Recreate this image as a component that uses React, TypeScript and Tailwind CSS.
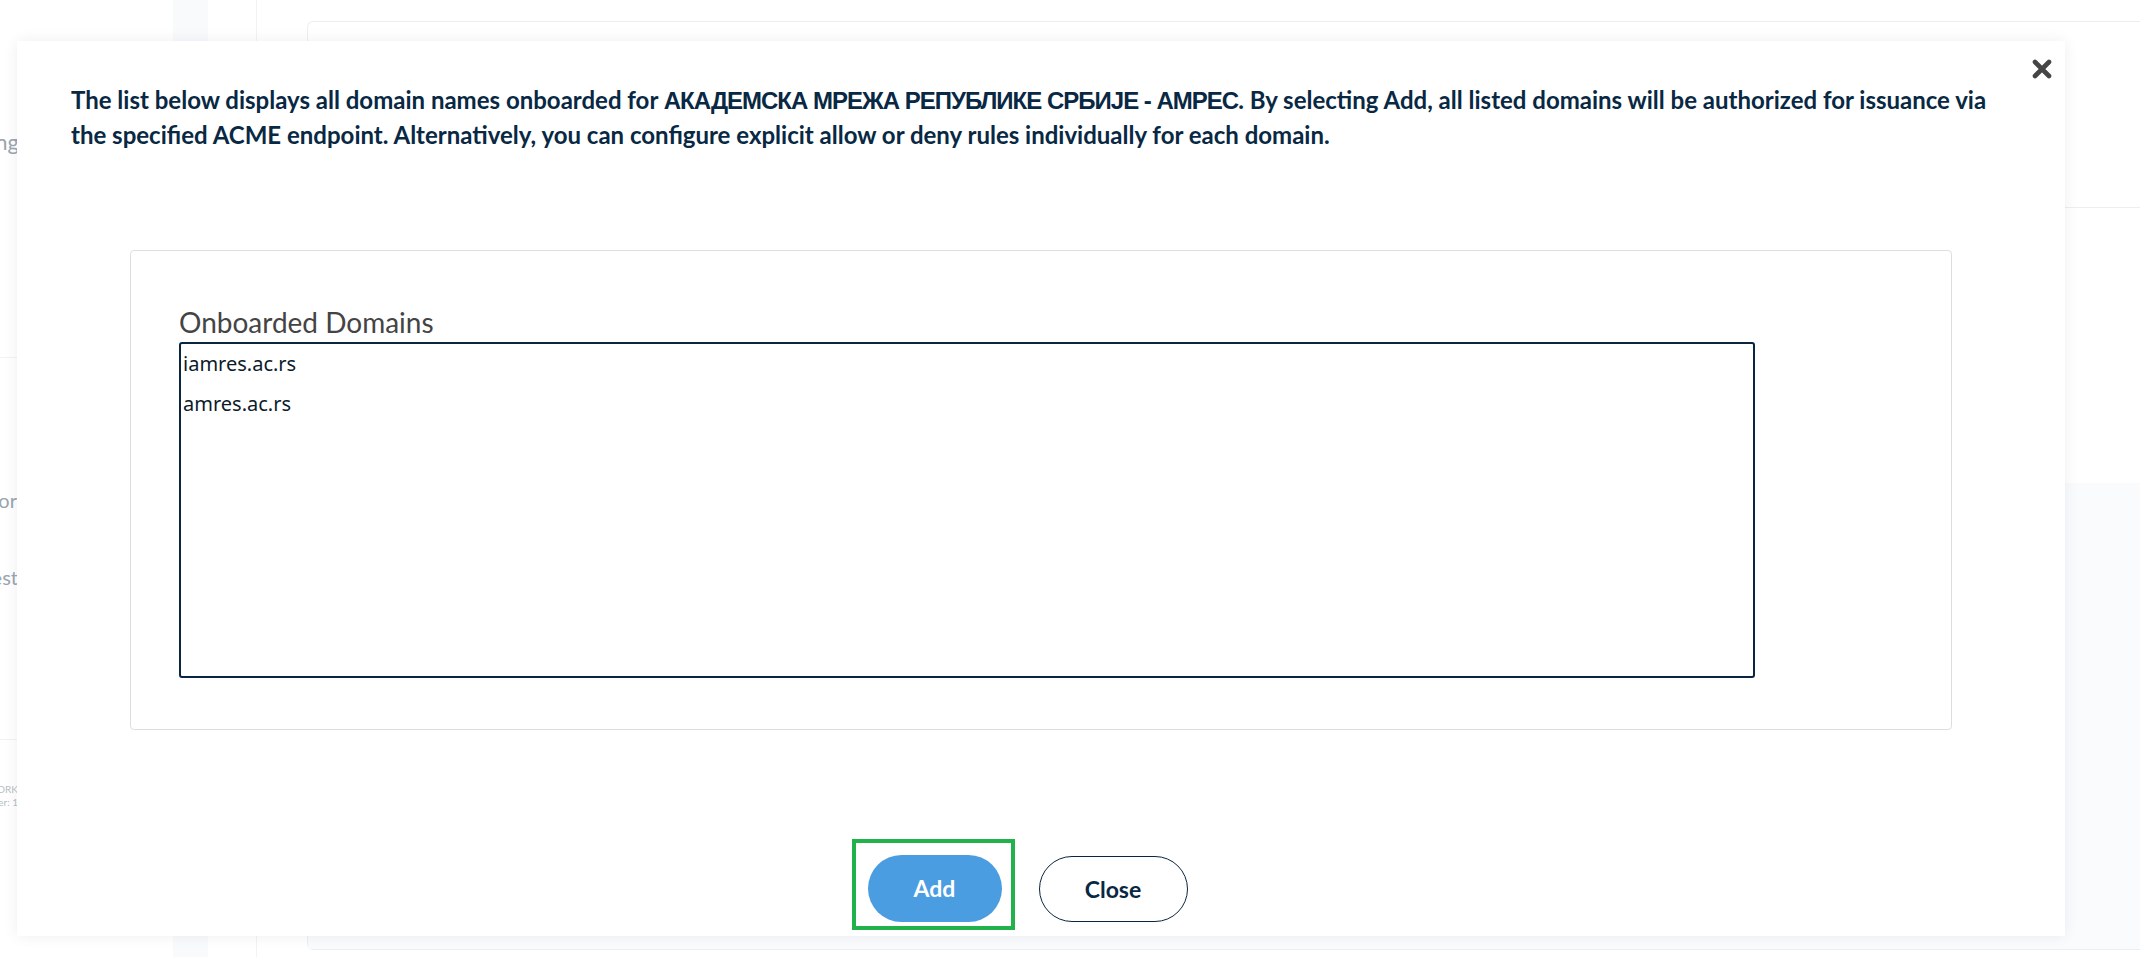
const domains = ['iamres.ac.rs', 'amres.ac.rs'];

function Sidebar() {
  // Only the last few pixels of the sidebar show past the dialog's left edge.
  return (
    <aside className="flex w-[173px] shrink-0 flex-col bg-white text-[#9aa5b1] [font-family:Lato,'Noto_Sans',sans-serif]">
      <div className="flex h-[358px] flex-col border-b border-[#f1f2f4]">
        <div className="mt-[124px] flex h-[34px] w-[19px] items-center justify-end whitespace-nowrap text-[22px]">
          Signing
        </div>
      </div>
      <div className="flex h-[382px] flex-col border-b border-[#f1f2f4]">
        <div className="mt-[126px] flex h-[32px] w-[17px] items-center justify-end whitespace-nowrap text-[20px]">
          Monitor
        </div>
        <div className="mt-[45px] flex h-[32px] w-[18px] items-center justify-end whitespace-nowrap text-[20px]">
          Request
        </div>
      </div>
      <div className="mt-[43px] flex w-[18px] flex-col items-end whitespace-nowrap text-[10px] leading-[13px] text-[#b8bfc7]">
        <span>NETWORK</span>
        <span>Server: 1</span>
      </div>
    </aside>
  );
}

function Background() {
  return (
    <div className="flex h-full w-full">
      <Sidebar />
      <div className="w-[35px] shrink-0 bg-[#f9fafc]" />
      <div className="w-[49px] shrink-0 border-r border-[#f2f3f5] bg-white" />
      <main className="flex-1 pl-[50px] pt-[21px]">
        <div className="flex h-[929px] flex-col rounded-l-[6px] border-y border-l border-[#eceef0] bg-white">
          <div className="h-[186px] border-b border-[#eceef0]" />
          <div className="h-[275px]" />
          <div className="flex-1 bg-[#fafbfd]" />
        </div>
      </main>
    </div>
  );
}

function Dialog() {
  return (
    <div className="absolute left-[17px] top-[41px] flex h-[895px] w-[2048px] flex-col bg-white shadow-[0_0_14px_rgba(20,30,50,0.07)] [font-family:Lato,'Noto_Sans',sans-serif]">
      <button className="absolute right-[13px] top-[18px] text-[#454545]" aria-label="Close">
        <svg width="20" height="20" viewBox="0 0 20 20">
          <path d="M3 3L17 17M17 3L3 17" stroke="currentColor" strokeWidth="4.6" strokeLinecap="round" />
        </svg>
      </button>

      <p className="whitespace-nowrap px-[54px] pt-[42px] text-[24px] font-bold leading-[34px] text-[#082843]">
        The list below displays all domain names onboarded for{' '}
        <span className="tracking-[-1px] [font-family:'Liberation_Sans',sans-serif]">
          АКАДЕМСКА МРЕЖА РЕПУБЛИКЕ СРБИЈЕ - АМРЕС
        </span>
        . By selecting Add, all listed domains will be authorized for issuance via
        <br />
        the specified ACME endpoint. Alternatively, you can configure explicit allow or deny rules individually for
        each domain.
      </p>

      <div className="mx-[113px] mt-[98px] h-[480px] rounded-[4px] border border-[#dcdfe2] pl-[48px] pt-[54px]">
        <label className="block text-[28px] leading-[34px] text-[#444]">Onboarded Domains</label>
        <div className="mt-[3px] h-[336px] w-[1576px] rounded-[3px] border-2 border-[#0a2540] pl-[2px] [font-family:'Noto_Sans',sans-serif]">
          {domains.map((d) => (
            <div key={d} className="text-[20px] leading-[40px] text-[#0b1a2a]">
              {d}
            </div>
          ))}
        </div>
      </div>

      <div className="mt-[109px] flex items-start justify-center pr-[43px]">
        <div className="border-4 border-[#22b24c] pb-[4px] pl-[12px] pr-[9px] pt-[12px]">
          <button className="h-[67px] w-[134px] rounded-full bg-[#4a9de0] text-[23px] font-bold text-white">
            Add
          </button>
        </div>
        <button className="ml-[24px] mt-[17px] h-[66px] w-[149px] rounded-full border border-[#0a2540] bg-white text-[23px] font-bold text-[#082843]">
          Close
        </button>
      </div>
    </div>
  );
}

export default function App() {
  return (
    <div className="relative h-[957px] w-[2140px] overflow-hidden bg-white">
      <Background />
      <Dialog />
    </div>
  );
}
